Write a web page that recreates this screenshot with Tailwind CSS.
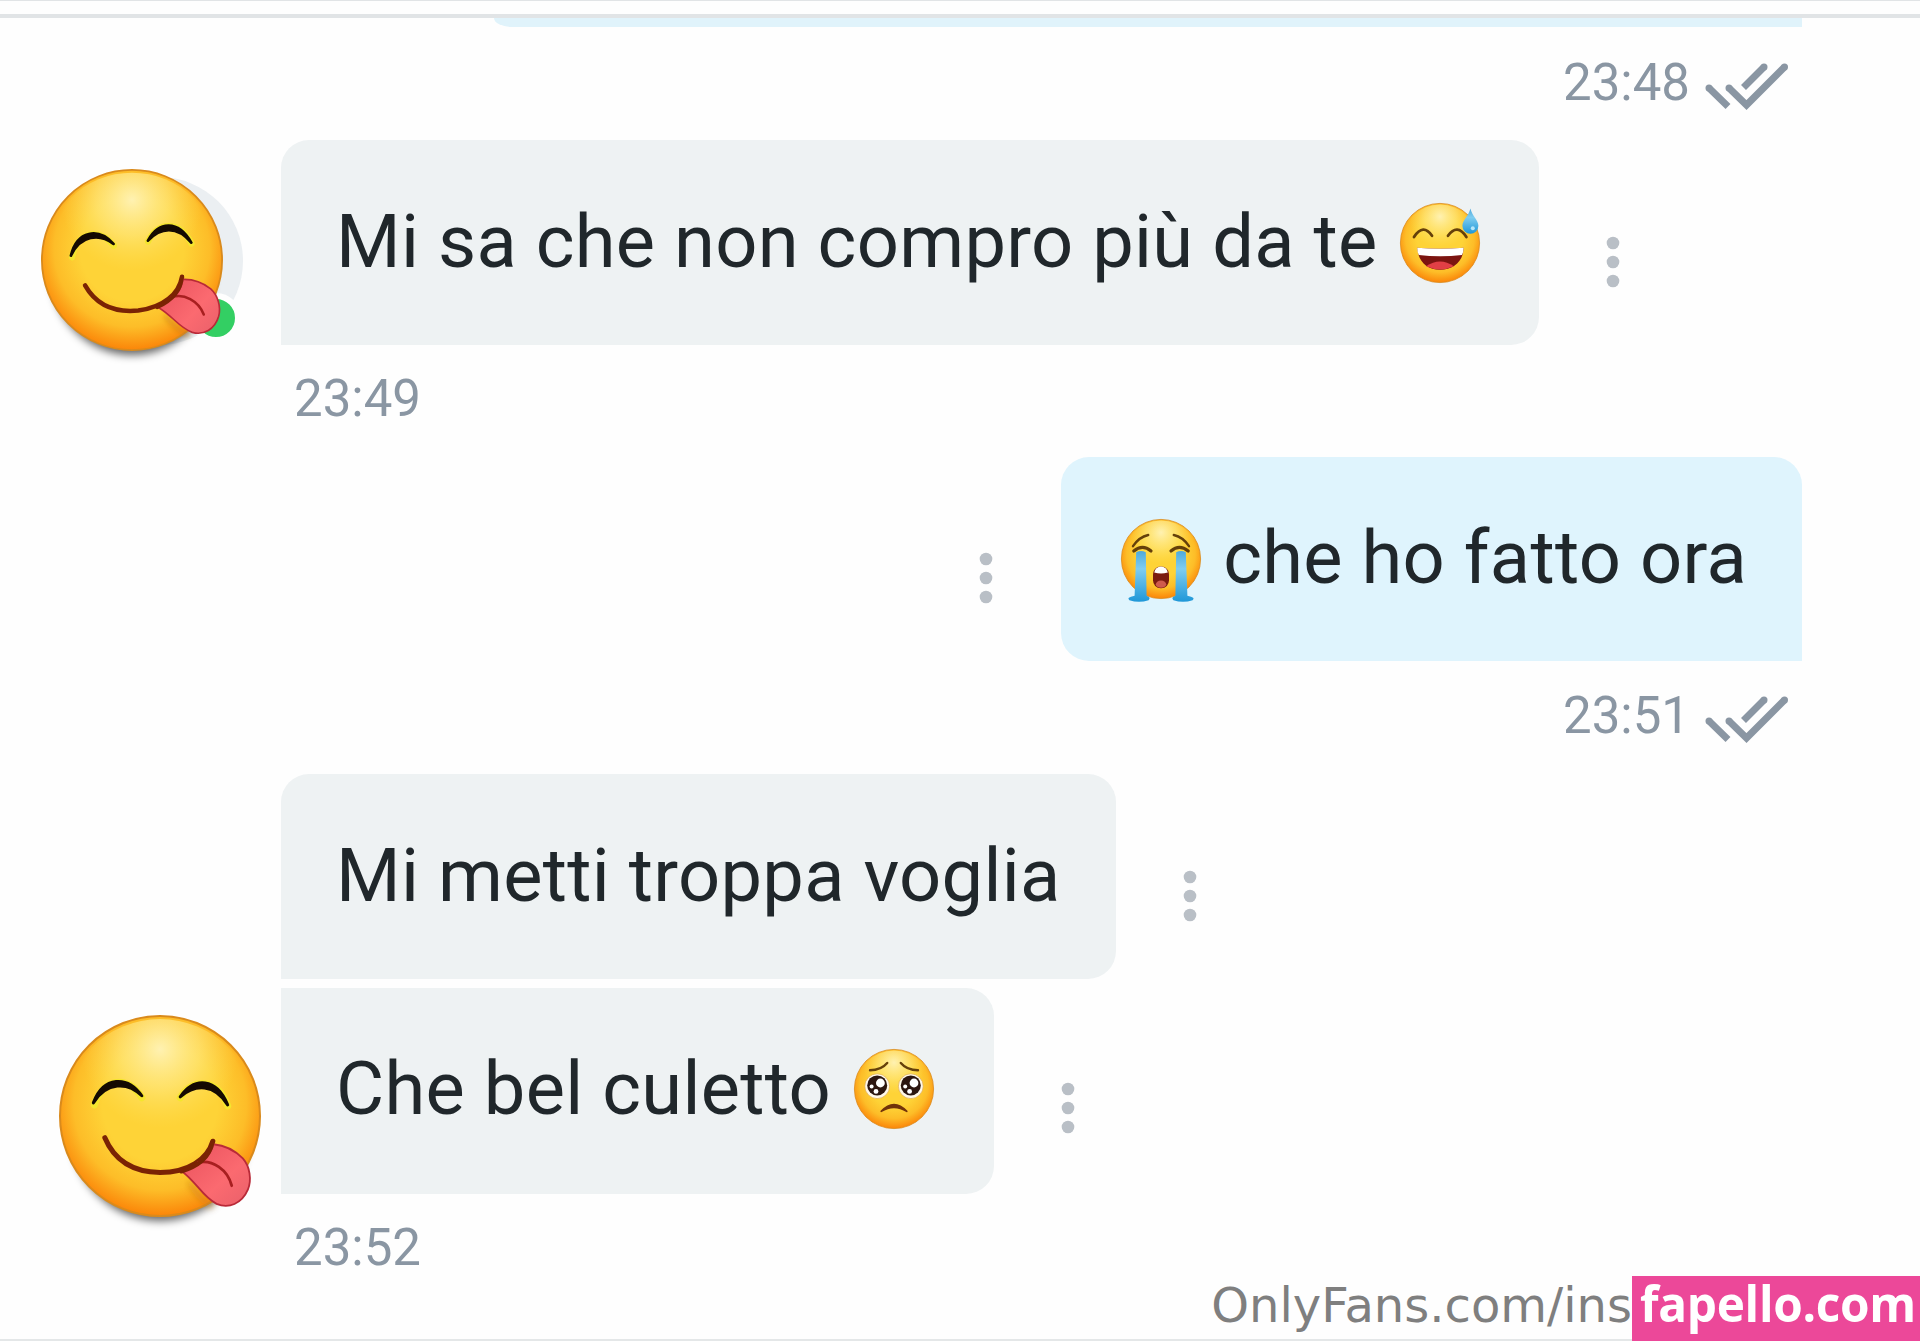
<!DOCTYPE html>
<html lang="it">
<head>
  <meta charset="utf-8">
  <title>Chat</title>
  <script src="https://cdn.jsdelivr.net/npm/@tailwindcss/browser@4"></script>
</head>
<body class="bg-[#fefefe] font-['Roboto',sans-serif] text-[#20272b]">

  <!-- shared shapes -->
  <svg class="absolute w-0 h-0" aria-hidden="true">
    <defs>
      <radialGradient id="skin" gradientUnits="userSpaceOnUse" cx="0" cy="-12" r="114">
        <stop offset="0.5" stop-color="#fed337"/>
        <stop offset="0.75" stop-color="#fdbd28"/>
        <stop offset="1" stop-color="#fb7f05"/>
      </radialGradient>
      <radialGradient id="shine" gradientUnits="userSpaceOnUse" cx="0" cy="-66" r="78">
        <stop offset="0" stop-color="#fff3b8" stop-opacity="0.95"/>
        <stop offset="0.5" stop-color="#ffea85" stop-opacity="0.6"/>
        <stop offset="1" stop-color="#ffe25a" stop-opacity="0"/>
      </radialGradient>
      <linearGradient id="tongue" x1="0" y1="0" x2="1" y2="1">
        <stop offset="0" stop-color="#e8505c"/>
        <stop offset="0.6" stop-color="#fb6a70"/>
        <stop offset="1" stop-color="#e9606a"/>
      </linearGradient>
      <linearGradient id="tear" x1="0" y1="0" x2="0" y2="1">
        <stop offset="0" stop-color="#4fa9dc"/>
        <stop offset="0.35" stop-color="#7fcdf0"/>
        <stop offset="1" stop-color="#1f97d8"/>
      </linearGradient>
      <filter id="soft" x="-50%" y="-50%" width="200%" height="200%"><feGaussianBlur stdDeviation="3"/></filter>
    </defs>

    <symbol id="face" viewBox="-100 -100 200 200" overflow="visible">
      <circle r="99" fill="url(#skin)" stroke="#d98a1c" stroke-width="2"/>
      <circle r="96" fill="url(#shine)"/>
    </symbol>

    <symbol id="yum" viewBox="-100 -100 200 200" overflow="visible">
      <g fill="none" stroke-linecap="round" stroke-linejoin="round">
        <path d="M-65 -11C-56 -39 -31 -40 -18 -18M20 -18C33 -39 57 -37 67 -10" stroke="#f5e52e" stroke-width="7"/>
        <path d="M-66 -13C-56 -40 -32 -40 -18 -20C-32 -34 -53 -34 -66 -13ZM20 -19C34 -39 56 -38 67 -11C54 -32 35 -32 20 -19Z" fill="#150a02" stroke="#150a02" stroke-width="3"/>
        <path d="M-54.600 21.500C-44 47 -22 55.500 0 56C28 56 47 43 52.300 25" stroke="#7a2304" stroke-width="5"/>
        <path d="M30 67Q39 82 50 88" stroke="#c97a10" stroke-opacity="0.5" stroke-width="6" filter="url(#soft)"/>
        <path d="M53 28C64 29 75 35 82 42C89 50 91 63 87 73C81 87 68 92 56 87C42 80 36 65 21.500 54.600C36 50 48 45 53 28Z" fill="url(#tongue)" stroke="#b92a38" stroke-width="1.800"/>
        <path d="M38 46C52 43 67 53 71 69" stroke="#a81f20" stroke-width="2.800"/>
        <path d="M21 55C37 50 49 42 52.300 25" stroke="#7a2304" stroke-width="4"/>
      </g>
    </symbol>

    <symbol id="checks" viewBox="0 0 84 48" overflow="visible">
      <g fill="none" stroke="#8a96a3" stroke-width="7">
        <path d="M4 25L23 43.500M24 25L41.500 42L79.500 4M59 4L38.500 24.500"/>
      </g>
      <g fill="#8a96a3">
        <circle cx="4" cy="25" r="3.500"/><circle cx="24" cy="25" r="3.500"/>
        <circle cx="79.500" cy="4" r="3.500"/><circle cx="59" cy="4" r="3.500"/>
      </g>
    </symbol>

    <symbol id="dots" viewBox="0 0 14 52">
      <g fill="#b9bfc6"><circle cx="7" cy="7" r="6.300"/><circle cx="7" cy="26" r="6.300"/><circle cx="7" cy="45" r="6.300"/></g>
    </symbol>
  </svg>

  <div class="relative h-[1341px] w-[1920px] overflow-hidden">

    <header class="h-[18px] border-t border-b-[4px] border-[#e1e4e6]"></header>

    <main class="flex flex-col">

      <!-- 23:48, sent -->
      <section class="flex h-[122px] flex-col items-end pr-[118px]">
        <div class="h-[9px] w-[1308px] rounded-bl-[18px_9px] bg-[#e0f3fb]"></div>
        <div class="mt-[26px] flex h-[60px] items-center pr-[13px]">
          <span class="w-[142px] whitespace-nowrap text-[51px] leading-[60px] text-[#8a96a3]">23:48</span>
          <svg class="mt-[7px] h-[48px] w-[84px]"><use href="#checks"/></svg>
        </div>
      </section>

      <!-- 23:49, received -->
      <section class="flex h-[317px]">
        <div class="relative w-[281px] shrink-0">
          <div class="absolute left-[75px] top-[37px] size-[168px] rounded-full bg-[#ebeff2]"></div>
          <div class="absolute left-[191px] top-[153px] size-[50px] rounded-full border-[6px] border-[#fefefe] bg-[#33cf63]"></div>
          <div class="absolute left-[52px] top-[52px] h-[163px] w-[160px] rounded-full bg-black/60 blur-[4px]"></div>
          <svg class="absolute left-[41px] top-[29px] size-[182px] overflow-visible" viewBox="-100 -100 200 200">
            <use href="#face" x="-100" y="-100" width="200" height="200"/>
            <g transform="rotate(-7)"><use href="#yum" x="-100" y="-100" width="200" height="200"/></g>
          </svg>
        </div>
        <div>
          <div class="flex items-center">
            <div class="flex h-[205px] w-[1258px] items-center justify-between rounded-[28px] rounded-bl-none bg-[#eef2f3] pl-[55px] pr-[59px]">
              <span class="mb-[3px] whitespace-nowrap text-[74px] tracking-[0.320px]">Mi sa che non compro più da te</span>
              <svg class="size-[80px] overflow-visible" viewBox="-100 -100 200 200">
                <use href="#face" x="-100" y="-100" width="200" height="200"/>
                <path d="M-65 -15Q-42 -50 -20 -18M20 -18Q43 -50 66 -15" fill="none" stroke="#65400a" stroke-width="7" stroke-linecap="round"/>
                <path d="M-57 12Q0 17 59 12C58 48 32 67 0 67S-54 48 -57 12Z" fill="#7c1410"/>
                <path d="M-57 12Q0 17 59 12Q59 22 55 30Q0 36 -53 30Q-57 22 -57 12Z" fill="#fff"/>
                <path d="M-35 58Q0 34 35 58Q0 74 -35 58Z" fill="#e23f45"/>
                <path d="M76 -86C80 -68 96 -57 96 -43A20 20 0 0 1 56 -43C56 -57 72 -68 76 -86Z" fill="url(#tear)"/>
                <circle cx="82" cy="-37" r="5" fill="#b6e6fa"/>
              </svg>
            </div>
            <svg class="ml-[67px] mt-[38px] h-[52px] w-[14px]"><use href="#dots"/></svg>
          </div>
          <p class="ml-[13px] mt-[24px] text-[51px] leading-[60px] text-[#8a96a3]">23:49</p>
        </div>
      </section>

      <!-- 23:51, sent -->
      <section class="flex h-[317px] flex-col items-end pr-[118px]">
        <div class="flex items-center">
          <svg class="mr-[68px] mt-[38px] h-[52px] w-[14px]"><use href="#dots"/></svg>
          <div class="flex h-[204px] w-[741px] items-center justify-between rounded-[28px] rounded-br-none bg-[#dff4fd] pl-[60px] pr-[55px]">
            <svg class="size-[80px] overflow-visible" viewBox="-100 -100 200 200">
              <use href="#face" x="-100" y="-100" width="200" height="200"/>
              <g fill="none" stroke="#65400a" stroke-linecap="round">
                <path d="M-70 -32Q-55 -55 -32 -60M70 -32Q55 -55 32 -60" stroke-width="6"/>
                <path d="M-68 -20Q-46 -38 -25 -20M68 -20Q46 -38 25 -20" stroke-width="8"/>
              </g>
              <path d="M-62 -17Q-50 -23 -38 -17L-36 92Q-24 96 -31 103Q-55 111 -79 103Q-88 96 -66 92Z" fill="url(#tear)"/>
              <path d="M62 -17Q50 -23 38 -17L36 92Q24 96 31 103Q55 111 79 103Q88 96 66 92Z" fill="url(#tear)"/>
              <rect x="-20" y="19" width="40" height="54" rx="19" fill="#7a1b10"/>
              <path d="M-17 34Q-14 20 0 19Q14 20 17 34Q0 39 -17 34Z" fill="#fff"/>
              <ellipse cy="63" rx="13" ry="9" fill="#cf5a4c"/>
            </svg>
            <span class="mb-[4px] whitespace-nowrap text-[74px] tracking-[0.320px]">che ho fatto ora</span>
          </div>
        </div>
        <div class="mt-[25px] flex h-[60px] items-center pr-[13px]">
          <span class="w-[142px] whitespace-nowrap text-[51px] leading-[60px] text-[#8a96a3]">23:51</span>
          <svg class="mt-[7px] h-[48px] w-[84px]"><use href="#checks"/></svg>
        </div>
      </section>

      <!-- 23:52, received -->
      <section class="flex">
        <div class="relative w-[281px] shrink-0">
          <div class="absolute left-[72px] top-[265px] h-[182px] w-[176px] rounded-full bg-black/60 blur-[4px]"></div>
          <svg class="absolute left-[59px] top-[241px] size-[202px] overflow-visible" viewBox="-100 -100 200 200">
            <use href="#face" x="-100" y="-100" width="200" height="200"/>
            <use href="#yum" x="-100" y="-100" width="200" height="200"/>
          </svg>
        </div>
        <div>
          <div class="flex items-center">
            <div class="flex h-[205px] w-[835px] items-center rounded-[28px] rounded-bl-none bg-[#eef2f3] pl-[55px]">
              <span class="mb-[3px] whitespace-nowrap text-[74px] tracking-[0.320px]">Mi metti troppa voglia</span>
            </div>
            <svg class="ml-[67px] mt-[38px] h-[52px] w-[14px]"><use href="#dots"/></svg>
          </div>
          <div class="mt-[9px] flex items-center">
            <div class="flex h-[206px] w-[713px] items-center justify-between rounded-r-[28px] bg-[#eef2f3] pl-[55px] pr-[60px]">
              <span class="mb-[6px] whitespace-nowrap text-[74px] tracking-[0.320px]">Che bel culetto</span>
              <svg class="mb-[4px] size-[80px] overflow-visible" viewBox="-100 -100 200 200">
                <use href="#face" x="-100" y="-100" width="200" height="200"/>
                <path d="M-60 -47Q-32 -47 -17 -65M60 -47Q32 -47 17 -65" fill="none" stroke="#65400a" stroke-width="6" stroke-linecap="round"/>
                <g fill="#fff8e8" stroke="#d9a040" stroke-width="1.500"><circle cx="-42" cy="-7" r="31"/><circle cx="42" cy="-7" r="31"/></g>
                <g fill="#2c1610"><circle cx="-42" cy="-9" r="25"/><circle cx="42" cy="-9" r="25"/></g>
                <g fill="#fff">
                  <circle cx="-34" cy="-15" r="11"/><circle cx="50" cy="-15" r="11"/>
                  <circle cx="-56" cy="-6" r="5"/><circle cx="28" cy="-6" r="5"/>
                  <circle cx="-45" cy="6" r="6"/><circle cx="39" cy="6" r="6"/>
                </g>
                <path d="M-32 56Q0 22 32 56Q0 36 -32 56Z" fill="#71330a" stroke="#71330a" stroke-width="4" stroke-linejoin="round"/>
              </svg>
            </div>
            <svg class="ml-[67px] mt-[34px] h-[52px] w-[14px]"><use href="#dots"/></svg>
          </div>
          <p class="ml-[13px] mt-[24px] text-[51px] leading-[60px] text-[#8a96a3]">23:52</p>
        </div>
      </section>
    </main>

    <!-- watermark -->
    <div class="absolute bottom-0 left-0 flex h-[65px] w-full items-end">
      <div class="flex h-[65px] flex-1 items-center justify-end border-b-2 border-[#e4e7e8] pb-[6px]">
        <span class="whitespace-nowrap font-['DejaVu_Sans',sans-serif] text-[48px] leading-none text-[#7f7f7f]">OnlyFans.com/ins</span>
      </div>
      <div class="flex h-[65px] w-[288px] items-center bg-[#ec4899] pb-[12px] pl-[8px]">
        <span class="origin-left scale-x-[0.955] whitespace-nowrap font-['Open_Sans',sans-serif] text-[50px] font-bold leading-none tracking-[-0.3px] text-white">fapello.com</span>
      </div>
    </div>
  </div>
</body>
</html>
